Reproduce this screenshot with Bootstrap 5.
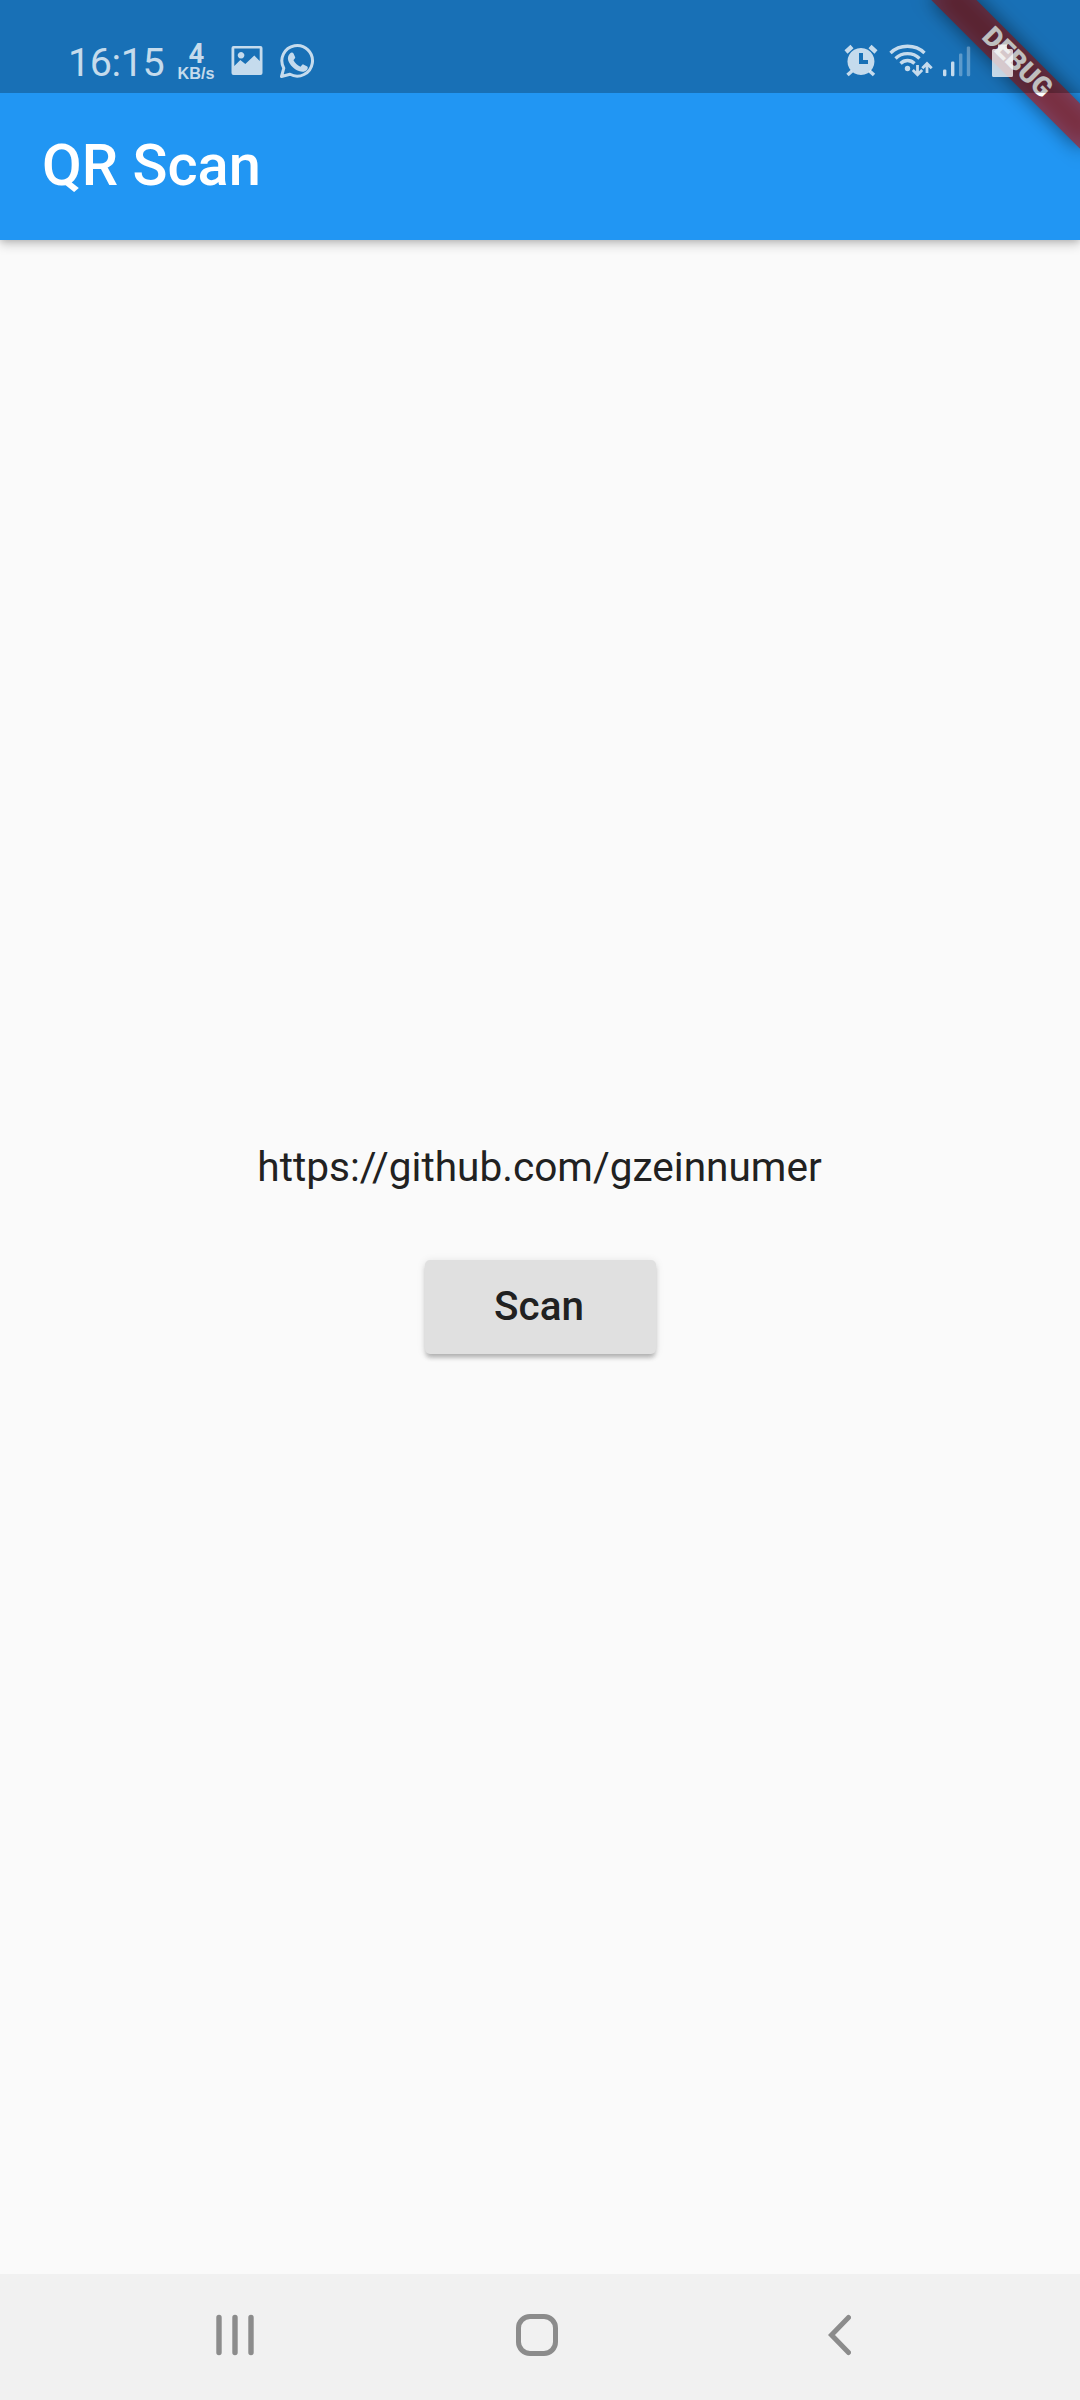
<!DOCTYPE html>
<html lang="en">
<head>
<meta charset="utf-8">
<meta name="viewport" content="width=device-width, initial-scale=1">
<title>QR Scan</title>
<link href="https://cdn.jsdelivr.net/npm/bootstrap@5.3.0/dist/css/bootstrap.min.css" rel="stylesheet">
<style>
body{font-family:Roboto,"Noto Sans",sans-serif;background:#fafafa;color:#212121}
.screen{width:1080px;height:2400px}
.app-header{height:240px;background:#2196f3;box-shadow:0 5px 10px rgba(0,0,0,.18),0 1px 6px rgba(0,0,0,.14);z-index:1}
.status{height:93px;background:rgba(0,0,0,.25);padding:30px 67px 0 68px;z-index:3;color:rgba(255,255,255,.75)}
.status svg{display:block;flex:none}
.clock{font-size:39.5px;line-height:66px;height:62px;width:97px;letter-spacing:-.4px}
.speed{width:38px;margin-left:12px;font-family:"Liberation Sans",sans-serif;font-weight:700}
.speed-num{font-family:Roboto,sans-serif;font-size:27.5px;line-height:26px;padding-top:11px;padding-left:1px}
.speed-unit{font-size:16.2px;line-height:15px;margin-top:-1px;white-space:nowrap}
.title{font-size:57.75px;font-weight:500;line-height:1;padding:0 42px 2px}
.ribbon{left:912px;top:47px;width:210px;height:31.5px;transform:rotate(45deg);z-index:2}
.ribbon-shade{inset:0;background:rgba(0,0,0,.5);filter:blur(10px)}
.ribbon-face{inset:0;background:rgba(183,28,28,.627);color:#fff;font-size:27px;font-weight:900;line-height:31.5px}
.url{font-size:40.6px;line-height:48px;margin-top:903px;padding-right:1px}
.btn-scan{--bs-btn-bg:#e0e0e0;--bs-btn-color:#212121;width:231px;height:94px;margin-top:69px;padding:6px 13px 6px 11px;border:0;border-radius:5px;font-size:40.4px;font-weight:500;line-height:1;box-shadow:0 5px 4px -2px rgba(0,0,0,.16),0 4px 5px rgba(0,0,0,.11),0 1px 8px rgba(0,0,0,.1)}
.sysnav{height:126px;background:#f1f1f1;padding:0 229px 4px 216px}
</style>
</head>
<body>
<div class="screen position-relative overflow-hidden d-flex flex-column">
  <header class="app-header position-relative d-flex flex-column">
    <div class="status position-relative d-flex align-items-start">
      <div class="clock">16:15</div>
      <div class="speed text-center"><div class="speed-num">4</div><div class="speed-unit">KB/s</div></div>
      <svg class="ms-3" width="32" height="60" viewBox="231 30 32 60"><path fill="currentColor" fill-rule="evenodd" d="M233.500 46h27q2 0 2 2v25q0 2-2 2h-27q-2 0-2-2V48q0-2 2-2zm.8 2.500v17.500l6-6 5 4 9-8.500 5.400 5.400V48.500zM241 52a3.300 3.300 0 1 0 .1 0z"/></svg>
      <svg class="ms-3" width="36" height="60" viewBox="279 30 36 60"><path fill="none" stroke="currentColor" stroke-width="3" stroke-linejoin="round" d="M281.500 76.500l2.300-8.300A15.300 15.300 0 1 1 290 74.300z"/><path fill="currentColor" d="M290 53.500c1-1.300 2.800-1.300 3.500 0l1.700 3.800c.3.800-1.300 2.300-1.700 3 1.500 3 3.800 5 7 6.400.9-.7 1.900-2.600 2.800-2.300l4 2c1 .7.300 2.800-.4 3.600-2 2-4.800 2.300-8 1-5.500-2.200-8.600-5.800-10.600-10.300-.9-2.600-.2-5.500 1.700-7.200z"/></svg>
      <svg class="ms-auto" width="170" height="60" viewBox="843 30 170 60">
        <g fill="currentColor"><path fill-rule="evenodd" d="M861 48a13.500 13.500 0 1 1-.1 0zM859 53v11h9v-4h-5v-7z"/></g>
        <g fill="none" stroke="currentColor">
          <path stroke-width="4.500" d="M846 52l6-5.500M870 46.500l6 5.500"/><path stroke-width="3.600" d="M852 71l-4.500 4M869.500 71l4.500 4"/>
          <path stroke-width="3.300" d="M890.500 53c9-9 25-9 34 0M895.500 58.500c6.500-6.500 17.500-6.500 24 0M900.500 63.500c4-4 10-4 14 0"/>
          <path stroke-width="2.800" d="M917.500 65v9M912.800 70l4.700 4.700 4.700-4.700M927 73v-9M922.300 68.200l4.700-4.700 4.700 4.700"/>
        </g>
        <circle cx="907.500" cy="68.500" r="2.700" fill="currentColor"/>
        <g fill="currentColor"><rect x="943" y="69.500" width="3.400" height="6.700" rx="1.200"/><rect x="951" y="61.500" width="3.400" height="14.700" rx="1.200"/><g opacity=".4"><rect x="959" y="53.500" width="3.400" height="22.700" rx="1.200"/><rect x="966.800" y="46.500" width="3.400" height="29.700" rx="1.200"/></g>
        <path d="M998 44.500h9v4.500h4.500q1.500 0 1.500 1.500v25q0 1.500-1.500 1.500h-18q-1.500 0-1.500-1.500v-25q0-1.500 1.500-1.500h4.500z"/></g>
      </svg>
    </div>
    <div class="title text-white flex-grow-1 d-flex align-items-center">QR Scan</div>
    <div class="ribbon position-absolute"><div class="ribbon-shade position-absolute"></div><div class="ribbon-face position-absolute text-center">DEBUG</div></div>
  </header>
  <main class="flex-grow-1 d-flex flex-column align-items-center">
    <div class="url">https://github.com/gzeinnumer</div>
    <button class="btn btn-scan" type="button">Scan</button>
  </main>
  <nav class="sysnav d-flex align-items-center">
    <svg width="38" height="42" viewBox="0 0 38 42"><path d="M3 3.500v35M19 3.500v35M35 3.500v35" stroke="#8c8c8c" stroke-width="5.400" stroke-linecap="round"/></svg>
    <svg class="mx-auto" width="50" height="42" viewBox="0 0 50 42"><rect x="2.500" y="2.500" width="37" height="37" rx="11.500" fill="none" stroke="#8c8c8c" stroke-width="5"/></svg>
    <svg width="23" height="42" viewBox="0 0 23 42"><path d="M20.500 3.500L3.500 21l17 17.500" fill="none" stroke="#8c8c8c" stroke-width="5" stroke-linecap="round"/></svg>
  </nav>
</div>
<script src="https://cdn.jsdelivr.net/npm/bootstrap@5.3.0/dist/js/bootstrap.bundle.min.js"></script>
</body>
</html>
